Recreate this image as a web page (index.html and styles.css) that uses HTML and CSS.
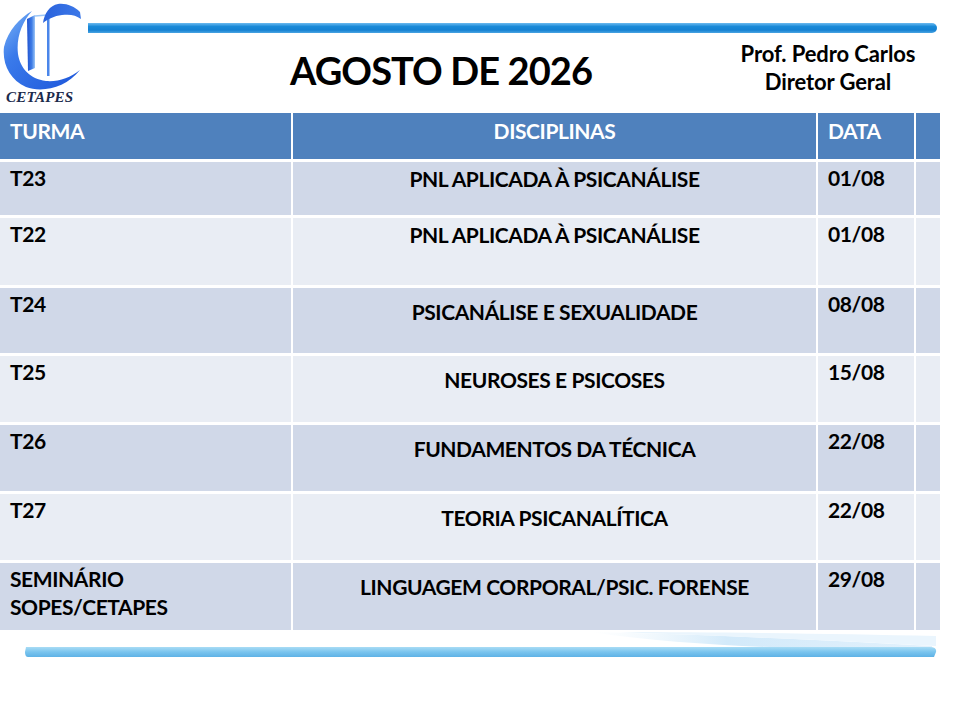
FILE: index.html
```html
<!DOCTYPE html>
<html lang="pt">
<head>
<meta charset="utf-8">
<title>Agosto de 2026</title>
<link rel="stylesheet" href="styles.css">
</head>
<body>
<div class="page">
  <header class="header">
    <div class="logo">
      <svg class="logo-mark" width="88" height="90" viewBox="0 0 88 90">
        <defs>
          <linearGradient id="cg" x1="0" y1="0" x2="1" y2="1">
            <stop offset="0" stop-color="#7fb6f6"/>
            <stop offset="0.35" stop-color="#3a7aea"/>
            <stop offset="1" stop-color="#1c55da"/>
          </linearGradient>
          <linearGradient id="sg" x1="0" y1="0" x2="1" y2="0">
            <stop offset="0" stop-color="#1f52d0"/>
            <stop offset="0.6" stop-color="#3f7de6"/>
            <stop offset="1" stop-color="#9cc6f7"/>
          </linearGradient>
          <linearGradient id="rg" x1="0" y1="0" x2="1" y2="0">
            <stop offset="0" stop-color="#2a62dc"/>
            <stop offset="1" stop-color="#3c78e8"/>
          </linearGradient>
        </defs>
        <path d="M32 9 C20 16 8 28 4 45 C2 62 10 78 26 85 C42 91 66 86 80 68 C70 76 58 80 46 79 C30 77 20 66 18 52 C16 36 22 20 32 9 Z" fill="url(#cg)"/>
        <path d="M27 17 L35 13 L35 66 L28 69 Z" fill="url(#sg)"/>
        <path d="M35 14 L47 13" stroke="#9cc6f7" stroke-width="1.5"/>
        <rect x="47" y="13" width="2.5" height="61" fill="#4a86ea"/>
        <path d="M43 21 C44 12 50 3 58 2 C66 1 74 4 80 10 L81 17 C76 13 70 12 62 13 C54 14 48 17 43 21 Z" fill="url(#rg)"/>
      </svg>
      <div class="logo-name">CETAPES</div>
    </div>
    <div class="header-main">
      <div class="top-rule"></div>
      <div class="title-row">
        <h1 class="title">AGOSTO DE 2026</h1>
        <div class="prof">
          <div>Prof. Pedro Carlos</div>
          <div>Diretor Geral</div>
        </div>
      </div>
    </div>
  </header>

  <div class="schedule">
    <div class="cell head">TURMA</div>
    <div class="cell head center">DISCIPLINAS</div>
    <div class="cell head">DATA</div>
    <div class="cell head"></div>

    <div class="cell dark">T23</div>
    <div class="cell dark center top">PNL APLICADA À PSICANÁLISE</div>
    <div class="cell dark">01/08</div>
    <div class="cell dark"></div>

    <div class="cell light">T22</div>
    <div class="cell light center top">PNL APLICADA À PSICANÁLISE</div>
    <div class="cell light">01/08</div>
    <div class="cell light"></div>

    <div class="cell dark">T24</div>
    <div class="cell dark center mid">PSICANÁLISE E SEXUALIDADE</div>
    <div class="cell dark">08/08</div>
    <div class="cell dark"></div>

    <div class="cell light">T25</div>
    <div class="cell light center mid">NEUROSES E PSICOSES</div>
    <div class="cell light">15/08</div>
    <div class="cell light"></div>

    <div class="cell dark">T26</div>
    <div class="cell dark center mid">FUNDAMENTOS DA TÉCNICA</div>
    <div class="cell dark">22/08</div>
    <div class="cell dark"></div>

    <div class="cell light">T27</div>
    <div class="cell light center mid">TEORIA PSICANALÍTICA</div>
    <div class="cell light">22/08</div>
    <div class="cell light"></div>

    <div class="cell dark">SEMINÁRIO<br>SOPES/CETAPES</div>
    <div class="cell dark center mid">LINGUAGEM CORPORAL/PSIC. FORENSE</div>
    <div class="cell dark">29/08</div>
    <div class="cell dark"></div>
  </div>

  <svg class="bottom-rule" width="960" height="32" viewBox="0 0 960 32">
    <defs>
      <linearGradient id="bl" x1="0" y1="0" x2="0" y2="1">
        <stop offset="0" stop-color="#a9dcf5"/>
        <stop offset="0.5" stop-color="#79c4ee"/>
        <stop offset="1" stop-color="#5eb2e6"/>
      </linearGradient>
      <linearGradient id="sw" x1="0" y1="0" x2="1" y2="0">
        <stop offset="0" stop-color="#eaf5fc" stop-opacity="0"/>
        <stop offset="0.4" stop-color="#d3eafa"/>
        <stop offset="1" stop-color="#e2f1fc"/>
      </linearGradient>
    </defs>
    <path d="M590 2 C700 4 820 10 932 16 L932 18 C820 20 700 18 590 2 Z" fill="url(#sw)"/>
    <path d="M620 2 C720 2 840 4 936 6 L936 16 C830 10 720 6 620 2 Z" fill="#eaf5fd"/>
    <path d="M26 17 L930 17 Q937 17 936 22 L934 27 L28 27 Q25 27 25 22 Z" fill="url(#bl)"/>
  </svg>
</div>
</body>
</html>
```

FILE: styles.css
```css
* {
  box-sizing: border-box;
}

html, body {
  margin: 0;
  padding: 0;
  background: #ffffff;
}

.page {
  width: 960px;
  height: 720px;
  overflow: hidden;
  font-family: Lato, "Liberation Sans", sans-serif;
  font-weight: 700;
  color: #000000;
}

.header {
  display: flex;
  height: 113px;
}

.logo {
  width: 88px;
  display: flex;
  flex-direction: column;
  align-items: flex-start;
}

.logo-mark {
  display: block;
  margin-top: 2px;
}

.logo-name {
  font-family: "Liberation Serif", serif;
  font-style: italic;
  font-weight: 700;
  font-size: 15px;
  line-height: 15px;
  color: #1b2a4c;
  margin-left: 6px;
  margin-top: -2px;
  letter-spacing: 0.2px;
}

.header-main {
  width: 849px;
  display: flex;
  flex-direction: column;
  padding-top: 23px;
}

.top-rule {
  height: 10px;
  border-radius: 0 6px 6px 0;
  background: linear-gradient(to bottom, #6cbaf0 0%, #1a8ad8 35%, #1481d2 70%, #4aa4e2 100%);
}

.title-row {
  display: flex;
  align-items: flex-start;
}

.title {
  margin: 14px 0 0 202px;
  font-size: 38px;
  line-height: 46px;
  font-weight: 700;
  letter-spacing: -0.9px;
  white-space: nowrap;
}

.prof {
  margin: 7px 21px 0 auto;
  width: 176px;
  text-align: center;
  font-size: 22px;
  line-height: 28px;
  letter-spacing: -0.1px;
  white-space: nowrap;
}

.schedule {
  display: grid;
  width: 940px;
  grid-template-columns: 291px 523px 96px 24px;
  grid-template-rows: 46px 53px 67px 65px 66px 66px 66px 67px;
  column-gap: 2px;
  row-gap: 3px;
  background: #ffffff;
}

.cell {
  font-size: 21px;
  line-height: 28px;
  padding: 2px 0 0 10px;
  letter-spacing: -0.4px;
  white-space: nowrap;
}

.cell.head {
  background: #4f81bd;
  color: #ffffff;
  padding-top: 4px;
}

.cell.dark {
  background: #d0d8e8;
}

.cell.light {
  background: #e9edf4;
}

.cell.center {
  text-align: center;
  padding-left: 0;
}

.cell.top {
  padding-top: 3px;
}

.cell.mid {
  padding-top: 10px;
}

.bottom-rule {
  display: block;
}
```
